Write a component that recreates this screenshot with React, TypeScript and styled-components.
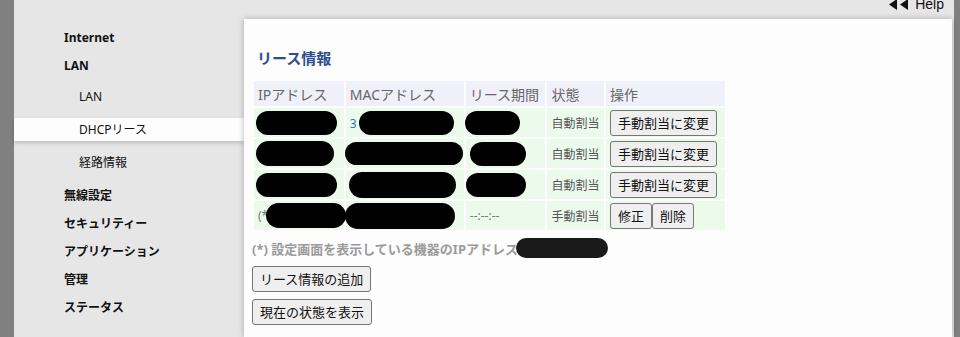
import styled, { createGlobalStyle } from "styled-components";

const GlobalStyle = createGlobalStyle`
  html, body {
    margin: 0;
    padding: 0;
    background: #e6e6e6;
    font-family: "Noto Sans", "Noto Sans CJK JP", sans-serif;
  }
`;

const Page = styled.div`
  display: flex;
  height: 337px;
  overflow: hidden;
  background: #e6e6e6;
`;

const Strip = styled.div<{ $w: number }>`
  width: ${(p) => p.$w}px;
  flex-shrink: 0;
  background: #808080;
`;

const Main = styled.div`
  flex: 1;
  display: flex;
  flex-direction: column;
`;

const TopBar = styled.div`
  height: 19px;
  display: flex;
  justify-content: flex-end;
  align-items: flex-end;
  padding-right: 10px;
`;

const HelpLink = styled.a`
  display: flex;
  align-items: center;
  gap: 6px;
  margin-bottom: 8px;
  color: #111;
  text-decoration: none;
  font-family: "Liberation Sans", Arial, sans-serif;
  font-size: 14px;
  line-height: 14px;
`;

const Body = styled.div`
  flex: 1;
  display: flex;
`;

const Sidebar = styled.nav`
  width: 230px;
  flex-shrink: 0;
  margin-top: -19px;
  padding-top: 24px;
  font-size: 12px;
  color: #111;
`;

const TopItem = styled.div`
  height: 28px;
  line-height: 28px;
  padding-left: 50px;
  font-weight: bold;
`;

const SubList = styled.div`
  display: flex;
  flex-direction: column;
  gap: 10px;
  padding: 5px 0 8px;
`;

const SubItem = styled.div<{ $active?: boolean }>`
  height: 23px;
  line-height: 23px;
  padding-left: 65px;
  background: ${(p) => (p.$active ? "#fdfdfd" : "transparent")};
  box-shadow: ${(p) => (p.$active ? "0 2px 4px rgba(0,0,0,0.18)" : "none")};
`;

const Panel = styled.section`
  flex: 1;
  background: #fdfdfd;
  box-shadow: 0 0 6px rgba(0, 0, 0, 0.28);
  padding: 28px 8px 0;
  margin-right: 2px;
  position: relative;
  z-index: 1;
`;

const Title = styled.h2`
  margin: 0 0 10px 5px;
  font-size: 15px;
  line-height: 22px;
  font-weight: bold;
  color: #2c4f8f;
`;

const LeaseTable = styled.table`
  border-collapse: separate;
  border-spacing: 2px;
  table-layout: fixed;
  width: 475px;
  font-size: 12px;
  color: #555;
`;

const Th = styled.th<{ $w: number }>`
  width: ${(p) => p.$w}px;
  height: 25px;
  padding: 0 4px;
  text-align: left;
  font-size: 14px;
  font-weight: normal;
  background: #f0f0fa;
  color: #666;
  white-space: nowrap;
`;

const Td = styled.td`
  height: 29px;
  padding: 0 4px;
  background: #ebfaeb;
  white-space: nowrap;
  overflow: visible;
`;

const Redact = styled.span<{ $w: number; $h: number; $x?: number }>`
  display: inline-block;
  vertical-align: middle;
  width: ${(p) => p.$w}px;
  height: ${(p) => p.$h}px;
  margin-left: ${(p) => p.$x ?? 0}px;
  border-radius: ${(p) => p.$h / 2}px;
  background: #000;
`;

const Dim = styled.span<{ $color?: string }>`
  font-size: 12px;
  color: ${(p) => p.$color ?? "#777"};
  vertical-align: middle;
`;

const Button = styled.button`
  font-family: "Noto Sans", "Noto Sans CJK JP", sans-serif;
  font-size: 13px;
  line-height: 20px;
  padding: 2px 7px;
  color: #111;
  background: #efefef;
  border: 1px solid #767676;
  border-radius: 3px;
  cursor: pointer;
`;

const Note = styled.p`
  margin: 6px 0 8px;
  font-size: 13px;
  font-weight: bold;
  color: #9a9a9a;
  display: flex;
  align-items: center;
`;

const ButtonStack = styled.div`
  display: flex;
  flex-direction: column;
  align-items: flex-start;
  gap: 7px;
`;

type Row = {
  ip: [number, number, number];
  mac: [number, number, number];
  lease: [number, number, number];
};

const autoRows: Row[] = [
  { ip: [81, 24, -2], mac: [95, 24, 2], lease: [55, 24, -5] },
  { ip: [78, 25, -2], mac: [118, 23, -5], lease: [56, 24, 0] },
  { ip: [81, 24, -2], mac: [107, 26, -1], lease: [60, 24, -4] },
];

const Help = () => (
  <HelpLink href="#">
    <svg width="20" height="11" viewBox="0 0 20 11">
      <polygon points="8,0 8,11 0,5.5" fill="#111" />
      <polygon points="19,0 19,11 11,5.5" fill="#111" />
    </svg>
    Help
  </HelpLink>
);

const App = () => {
  return (
    <Page>
      <GlobalStyle />
      <Strip $w={14} />
      <Main>
        <TopBar>
          <Help />
        </TopBar>
        <Body>
          <Sidebar>
            <TopItem>Internet</TopItem>
            <TopItem>LAN</TopItem>
            <SubList>
              <SubItem>LAN</SubItem>
              <SubItem $active>DHCPリース</SubItem>
              <SubItem>経路情報</SubItem>
            </SubList>
            <TopItem>無線設定</TopItem>
            <TopItem>セキュリティー</TopItem>
            <TopItem>アプリケーション</TopItem>
            <TopItem>管理</TopItem>
            <TopItem>ステータス</TopItem>
          </Sidebar>
          <Panel>
            <Title>リース情報</Title>
            <LeaseTable>
              <thead>
                <tr>
                  <Th $w={81}>IPアドレス</Th>
                  <Th $w={109}>MACアドレス</Th>
                  <Th $w={71}>リース期間</Th>
                  <Th $w={48}>状態</Th>
                  <Th $w={110}>操作</Th>
                </tr>
              </thead>
              <tbody>
                {autoRows.map((r, i) => (
                  <tr key={i}>
                    <Td>
                      <Redact $w={r.ip[0]} $h={r.ip[1]} $x={r.ip[2]} />
                    </Td>
                    <Td>
                      {i === 0 && <Dim $color="#2a7ab0">3</Dim>}
                      <Redact $w={r.mac[0]} $h={r.mac[1]} $x={r.mac[2]} />
                    </Td>
                    <Td>
                      <Redact $w={r.lease[0]} $h={r.lease[1]} $x={r.lease[2]} />
                    </Td>
                    <Td>自動割当</Td>
                    <Td>
                      <Button>手動割当に変更</Button>
                    </Td>
                  </tr>
                ))}
                <tr>
                  <Td>
                    <Dim>(*</Dim>
                    <Redact $w={80} $h={25} $x={-2} />
                  </Td>
                  <Td>
                    <Redact $w={110} $h={26} $x={-5} />
                  </Td>
                  <Td>
                    <Dim>--:--:--</Dim>
                  </Td>
                  <Td>手動割当</Td>
                  <Td>
                    <Button>修正</Button>
                    <Button>削除</Button>
                  </Td>
                </tr>
              </tbody>
            </LeaseTable>
            <Note>
              (*) 設定画面を表示している機器のIPアドレス
              <Redact $w={92} $h={20} $x={-2} style={{ background: "#1a1a1a" }} />
            </Note>
            <ButtonStack>
              <Button>リース情報の追加</Button>
              <Button>現在の状態を表示</Button>
            </ButtonStack>
          </Panel>
        </Body>
      </Main>
      <Strip $w={6} />
    </Page>
  );
};

export default App;
